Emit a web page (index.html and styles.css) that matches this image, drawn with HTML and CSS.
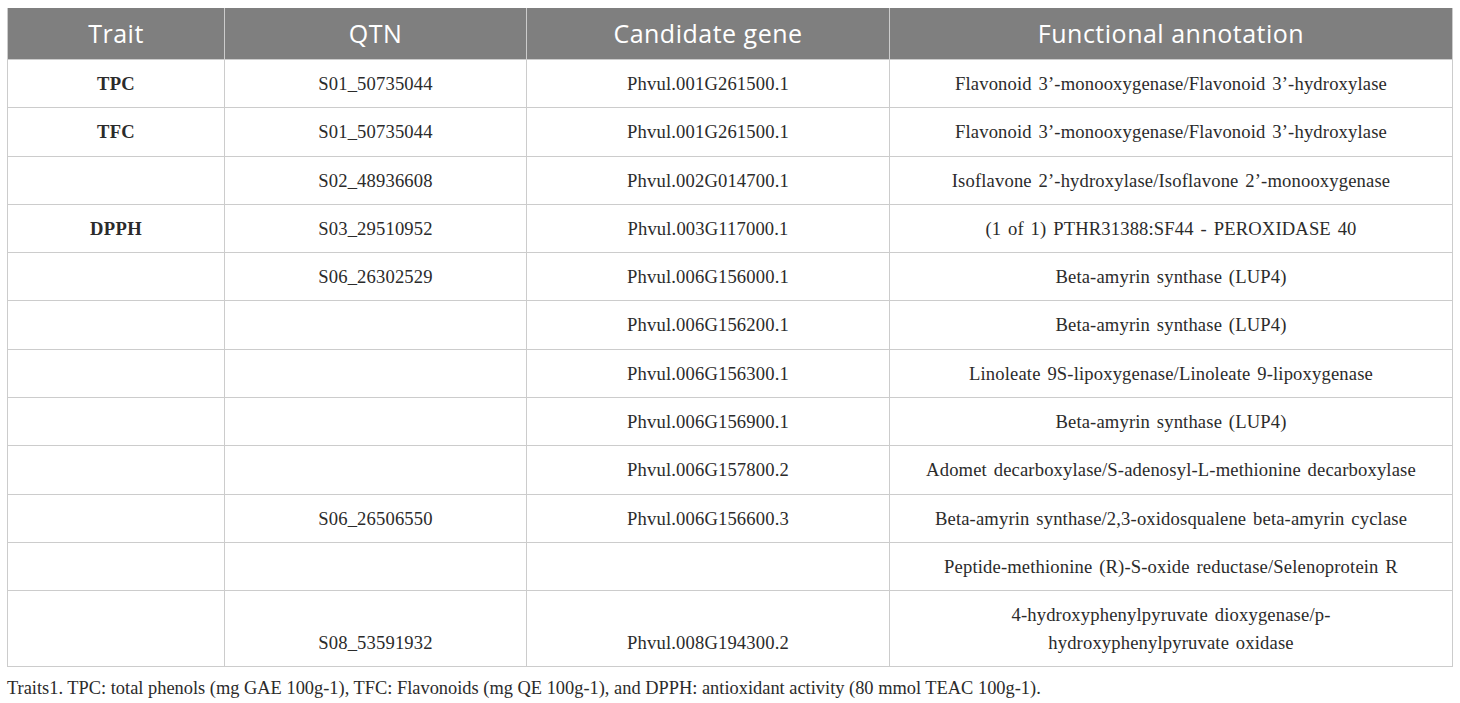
FILE: index.html
```html
<!DOCTYPE html>
<html lang="en">
<head>
<meta charset="utf-8">
<title>Candidate genes</title>
<link rel="stylesheet" href="styles.css">
</head>
<body>
<div class="page">
  <table class="data">
    <colgroup>
      <col class="c1"><col class="c2"><col class="c3"><col class="c4">
    </colgroup>
    <thead>
      <tr><th>Trait</th><th>QTN</th><th>Candidate gene</th><th>Functional annotation</th></tr>
    </thead>
    <tbody>
      <tr><td class="trait">TPC</td><td>S01_50735044</td><td>Phvul.001G261500.1</td><td>Flavonoid 3’-monooxygenase/Flavonoid 3’-hydroxylase</td></tr>
      <tr><td class="trait">TFC</td><td>S01_50735044</td><td>Phvul.001G261500.1</td><td>Flavonoid 3’-monooxygenase/Flavonoid 3’-hydroxylase</td></tr>
      <tr><td></td><td>S02_48936608</td><td>Phvul.002G014700.1</td><td>Isoflavone 2’-hydroxylase/Isoflavone 2’-monooxygenase</td></tr>
      <tr><td class="trait">DPPH</td><td>S03_29510952</td><td>Phvul.003G117000.1</td><td>(1 of 1) PTHR31388:SF44 - PEROXIDASE 40</td></tr>
      <tr><td></td><td>S06_26302529</td><td>Phvul.006G156000.1</td><td>Beta-amyrin synthase (LUP4)</td></tr>
      <tr><td></td><td></td><td>Phvul.006G156200.1</td><td>Beta-amyrin synthase (LUP4)</td></tr>
      <tr><td></td><td></td><td>Phvul.006G156300.1</td><td>Linoleate 9S-lipoxygenase/Linoleate 9-lipoxygenase</td></tr>
      <tr><td></td><td></td><td>Phvul.006G156900.1</td><td>Beta-amyrin synthase (LUP4)</td></tr>
      <tr><td></td><td></td><td>Phvul.006G157800.2</td><td>Adomet decarboxylase/S-adenosyl-L-methionine decarboxylase</td></tr>
      <tr><td></td><td>S06_26506550</td><td>Phvul.006G156600.3</td><td>Beta-amyrin synthase/2,3-oxidosqualene beta-amyrin cyclase</td></tr>
      <tr><td></td><td></td><td></td><td>Peptide-methionine (R)-S-oxide reductase/Selenoprotein R</td></tr>
      <tr class="last"><td></td><td>S08_53591932</td><td>Phvul.008G194300.2</td><td>4-hydroxyphenylpyruvate dioxygenase/p-<br>hydroxyphenylpyruvate oxidase</td></tr>
    </tbody>
  </table>
  <p class="note">Traits1. TPC: total phenols (mg GAE 100g-1), TFC: Flavonoids (mg QE 100g-1), and DPPH: antioxidant activity (80 mmol TEAC 100g-1).</p>
</div>
</body>
</html>
```
FILE: styles.css
```css
html, body {
  margin: 0;
  padding: 0;
  background: #ffffff;
}
.page {
  padding: 8px 8px 0 7px;
  font-family: "Liberation Serif", "Times New Roman", serif;
  color: #2b2b2b;
}
.data {
  width: 1445px;
  border-collapse: collapse;
  table-layout: fixed;
}
.c1 { width: 217px; }
.c2 { width: 302px; }
.c3 { width: 363px; }
.c4 { width: 563px; }
.data th {
  background: #7f7f7f;
  color: #ffffff;
  font-family: "Open Sans", "Liberation Sans", sans-serif;
  font-weight: 400;
  font-size: 25px;
  letter-spacing: 0.5px;
  line-height: 33px;
  padding: 9px 8px;
  border: 1px solid #cccccc;
  border-top: 0;
  text-align: center;
}
.data td {
  font-size: 18.6px;
  letter-spacing: 0.15px;
  word-spacing: 2px;
  line-height: 27.3px;
  padding: 10px 8px;
  border: 1px solid #cccccc;
  text-align: center;
  vertical-align: middle;
}
.data td.trait {
  font-weight: 700;
  letter-spacing: 0.3px;
}
.data tr.last td {
  vertical-align: bottom;
}
.note {
  margin: 10px 0 0 0;
  font-size: 18.4px;
  line-height: 22px;
  color: #2b2b2b;
}
```
